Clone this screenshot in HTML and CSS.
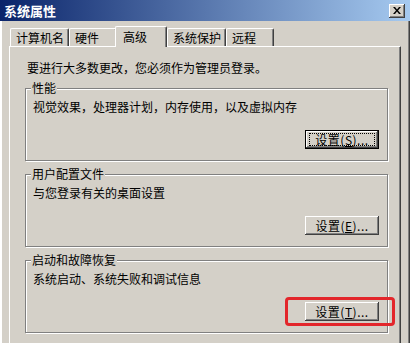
FILE: index.html
```html
<!DOCTYPE html>
<html lang="zh-CN">
<head>
<meta charset="utf-8">
<title>系统属性</title>
<link rel="stylesheet" href="styles.css">
</head>
<body>
<div class="window">
  <div class="titlebar">
    <span class="title">系统属性</span>
    <span class="close"><svg width="8" height="7" viewBox="0 0 8 7"><path d="M0 0h2l2 2.5L6 0h2L5 3.5 8 7H6L4 4.5 2 7H0l3-3.5z" fill="#000"/></svg></span>
  </div>
  <div class="client">
    <div class="tabs">
      <div class="tab">计算机名</div>
      <div class="tab">硬件</div>
      <div class="tab active">高级</div>
      <div class="tab">系统保护</div>
      <div class="tab">远程</div>
    </div>
    <div class="panel">
      <p class="note">要进行大多数更改，您必须作为管理员登录。</p>
      <div class="group">
        <span class="legend">性能</span>
        <p class="desc">视觉效果，处理器计划，内存使用，以及虚拟内存</p>
        <div class="actions">
          <button class="btn default"><span class="focus">设置(<u>S</u>)...</span></button>
        </div>
      </div>
      <div class="group">
        <span class="legend">用户配置文件</span>
        <p class="desc">与您登录有关的桌面设置</p>
        <div class="actions">
          <button class="btn"><span class="label">设置(<u>E</u>)...</span></button>
        </div>
      </div>
      <div class="group">
        <span class="legend">启动和故障恢复</span>
        <p class="desc">系统启动、系统失败和调试信息</p>
        <div class="actions">
          <div class="btn-wrap">
            <button class="btn"><span class="label">设置(<u>T</u>)...</span></button>
            <span class="highlight"></span>
          </div>
        </div>
      </div>
    </div>
  </div>
</div>
</body>
</html>
```
FILE: styles.css
```css
* { box-sizing: border-box; }
html, body { margin: 0; padding: 0; }
body {
  width: 410px;
  height: 343px;
  overflow: hidden;
  background: #d4d0c8;
  font-family: "Noto Sans CJK SC", "Noto Sans", sans-serif;
  font-size: 12px;
  color: #000;
}
.window {
  height: 343px;
  background: #d4d0c8;
  box-shadow: inset 2px 0 0 #fff, inset -1px 0 0 #404040, inset -2px 0 0 #808080;
  display: flex;
  flex-direction: column;
}
.titlebar {
  height: 21px;
  flex-shrink: 0;
  background: linear-gradient(to right, #0a246a, #a6caf0);
  display: flex;
  align-items: center;
  justify-content: space-between;
  padding: 0 5px 0 4px;
}
.title {
  color: #fff;
  font-weight: bold;
  font-size: 13px;
  line-height: 13px;
}
.close {
  width: 16px;
  height: 14px;
  margin-top: 1px;
  background: #d4d0c8;
  box-shadow: inset -1px -1px 0 #404040, inset 1px 1px 0 #fff, inset -2px -2px 0 #808080;
  display: flex;
  align-items: center;
  justify-content: center;
  padding-bottom: 1px;
}
.close svg { display: block; }
.client {
  flex: 1;
  display: flex;
  flex-direction: column;
  padding: 5px 9px 0 9px;
}
.tabs {
  display: flex;
  align-items: flex-end;
  height: 20px;
  padding-left: 1px;
}
.tab {
  height: 18px;
  min-width: 48px;
  padding: 0 4px 0 5px;
  line-height: 17px;
  background: #d4d0c8;
  border-top: 1px solid #fff;
  border-left: 1px solid #fff;
  border-right: 1px solid #404040;
  box-shadow: inset -1px 0 0 #808080;
  border-radius: 2px 2px 0 0;
  white-space: nowrap;
}
.tab.active {
  position: relative;
  z-index: 1;
  width: 52px;
  height: 21px;
  margin: 0 0 -1px -2px;
  padding-left: 7px;
  line-height: 19px;
}
.panel {
  flex: 1;
  display: flex;
  flex-direction: column;
  border-top: 1px solid #fff;
  border-left: 1px solid #fff;
  border-right: 1px solid #404040;
  box-shadow: inset -1px 0 0 #808080;
  padding: 15px 12px 0 15px;
}
.note {
  margin: 0 0 14px 2px;
  line-height: 12px;
}
.group {
  display: flex;
  flex-direction: column;
  border: 1px solid #808080;
  box-shadow: inset 1px 1px 0 #fff, 1px 1px 0 #fff;
  padding: 0 8px 11px 7px;
  margin-bottom: 13px;
}
.legend {
  align-self: flex-start;
  margin: -7px 0 0 -2px;
  padding: 0 1px;
  background: #d4d0c8;
  line-height: 12px;
}
.desc {
  margin: 7px 0 0;
  line-height: 12px;
  white-space: nowrap;
}
.actions {
  display: flex;
  justify-content: flex-end;
  margin-top: 17px;
}
.btn {
  width: 74px;
  height: 19px;
  padding: 0;
  border: none;
  margin: 0;
  font: inherit;
  color: #000;
  background: #d4d0c8;
  box-shadow: inset -1px -1px 0 #404040, inset 1px 1px 0 #fff, inset -2px -2px 0 #808080;
  display: flex;
  align-items: center;
  justify-content: center;
}
.btn.default {
  box-shadow: inset 0 0 0 1px #000, inset -2px -2px 0 #404040, inset 2px 2px 0 #fff, inset -3px -3px 0 #808080;
}
.label, .focus {
  line-height: 12px;
  letter-spacing: 0.5px;
}
.focus {
  flex: 1;
  align-self: stretch;
  margin: 3px 4px;
  border: 1px dotted #000;
  display: flex;
  align-items: center;
  justify-content: center;
}
.btn-wrap {
  position: relative;
  display: flex;
}
.highlight {
  position: absolute;
  top: -5px;
  bottom: -5px;
  left: -20px;
  right: -16px;
  border: 3px solid #e3262b;
  border-radius: 4px;
  pointer-events: none;
}
```
